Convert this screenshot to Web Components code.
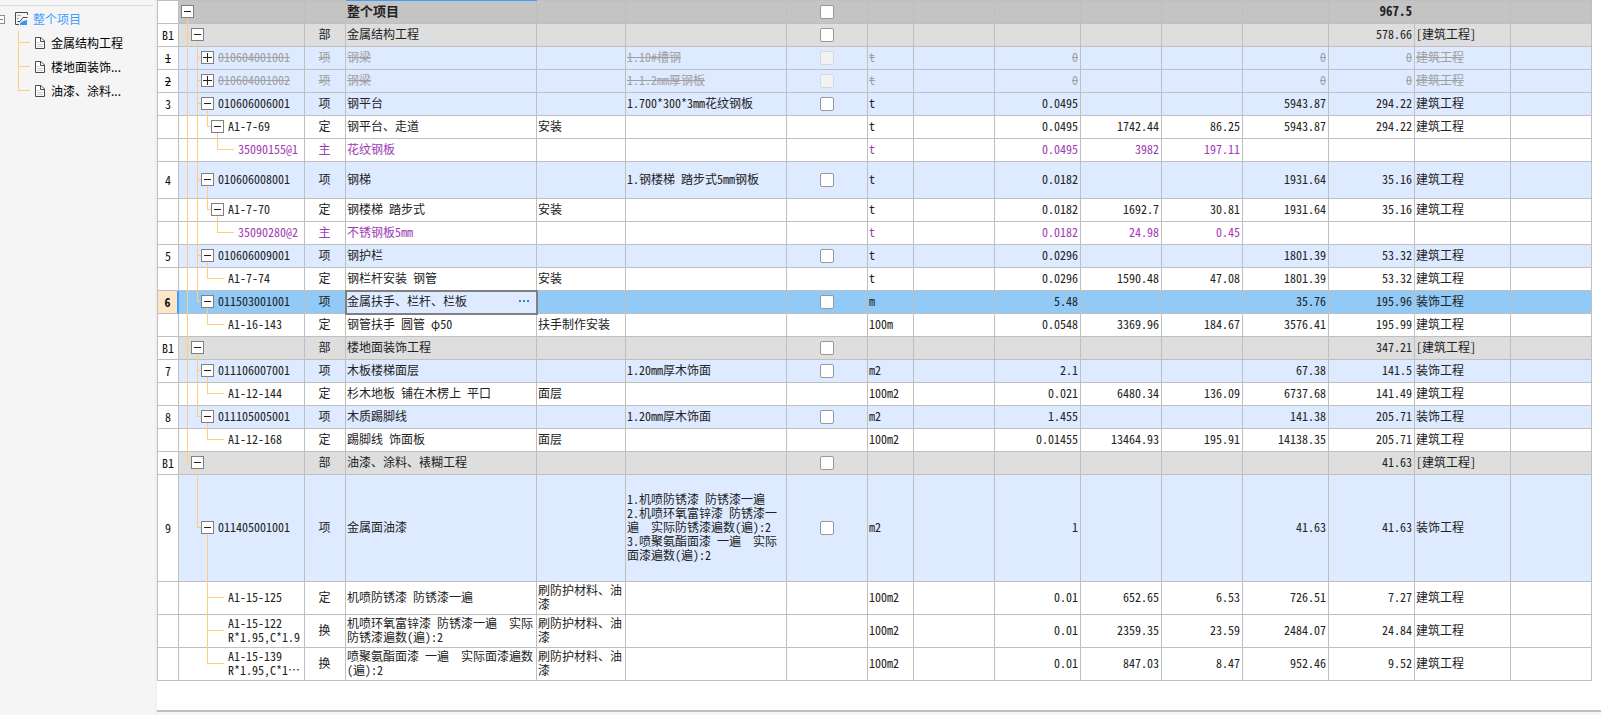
<!DOCTYPE html>
<html lang="zh-CN">
<head>
<meta charset="utf-8">
<title>分部分项工程量清单</title>
<style>
  html, body { height: 100%; margin: 0; }
  body { background: #fff; font: 12px/14px "Noto Sans CJK SC", sans-serif; color: #222; }
</style>
</head>
<body>
<estimate-app></estimate-app>

<template id="app-template">
  <style>
    :host { display: grid; grid-template-columns: 157px minmax(0, 1fr); min-height: 100%; background: #f5f5f5; }
    main { display: flex; flex-direction: column; min-width: 0; padding-bottom: 3px; }
    .sheet { flex: 1; background: #fff; border-bottom: 2px solid #bfbfbf; padding-right: 9px; overflow-x: auto; }
    aside { border-right: 2px solid #f0f0f0; min-width: 0; overflow: hidden; }
  </style>
  <aside>
    <project-tree>
      <project-node>金属结构工程</project-node>
      <project-node>楼地面装饰...</project-node>
      <project-node last>油漆、涂料...</project-node>
    </project-tree>
  </aside>
  <main><div class="sheet"><quantity-grid></quantity-grid></div></main>
</template>

<template id="tree-template">
  <style>
    :host { display: block; padding-top: 5px; color: #000; }
    .root { border-top: 1px solid #dedede; margin-right: 2px; padding-top: 1px; display: flex; align-items: center; height: 24px; line-height: 24px; }
    button { width: 5px; height: 9px; padding: 0; border: 1px solid #8c8c8c; border-left: 0; background: #fff; display: flex; align-items: center; }
    button::before { content: ""; width: 3px; height: 1px; background: #2f8de4; }
    svg { margin: 0 5px 0 10px; flex: none; }
    a { color: #409eff; text-decoration: none; }
    .nodes { padding-left: 18px; }
  </style>
  <nav aria-label="项目结构">
    <div class="root">
      <button type="button" aria-label="折叠整个项目"></button>
      <svg width="13" height="14" viewBox="0 0 13 14" fill="none">
        <path d="M12.500 3V0.500H0.500V12.500H4" stroke="#4a4a4a"/>
        <path d="M2 3.500H6M2 6.500H4" stroke="#7ab8f8"/>
        <path d="M2.500 9.500H5L8 5.500H12.500" stroke="#4a4a4a"/>
        <path d="M5 13V11L8 9L12 8V13Z" fill="#3c96f5"/>
      </svg>
      <a href="#all">整个项目</a>
    </div>
    <div class="nodes"><slot></slot></div>
  </nav>
</template>

<template id="node-template">
  <style>
    :host { display: flex; height: 24px; line-height: 24px; align-items: center; }
    .branch { width: 12px; height: 24px; display: grid; grid-template-rows: 12px 12px; }
    .branch i { border-left: 1px solid #ffcc80; }
    .branch i:first-child { border-bottom: 1px solid #ffcc80; }
    :host([last]) .branch i:last-child { border-left-color: transparent; }
    svg { margin: 0 6px 0 5px; flex: none; }
    a { color: #000; text-decoration: none; white-space: nowrap; }
  </style>
  <span class="branch"><i></i><i></i></span>
  <svg width="10" height="12" viewBox="0 0 10 12" fill="none">
    <path d="M0.500 0.500H6L9.500 4V11.500H0.500Z" fill="#fff" stroke="#4a4a4a"/>
    <path d="M5.500 0.500V4.500H9.500" stroke="#4a4a4a"/>
    <path d="M2 5.500H4M2 7.500H8M2 9.500H8" stroke="#c8c8c8"/>
  </svg>
  <a href="#section"><slot></slot></a>
</template>

<template id="branch-template">
  <style>
    :host { display: flex; height: calc(100% + 1px); margin-bottom: -1px; align-items: center; padding-left: 2px; box-sizing: border-box; }
    .lane, .joint { flex: none; height: 100%; display: flex; flex-direction: column; }
    .lane { width: 10px; }
    .joint { width: 13px; margin-right: 4px; }
    .up, .down { margin-left: 6px; box-sizing: border-box; }
    .up { flex: 1 1 0; }
    .down { flex: 1 1 2px; }
    .line { border-left: 1px solid #ffcc80; }
    .across { height: 1px; background: #ffcc80; margin-left: 6px; flex: none; }
    .joint .across { margin-left: 0; }
    button { flex: none; width: 13px; height: 13px; padding: 0; border: 1px solid #808080; background: #fff; display: grid; place-items: center; }
    .text { min-width: 0; padding-bottom: 3px; overflow: hidden; }
  </style>
</template>

<template id="grid-template">
  <style>
    :host { display: block; min-width: 1244px; font-feature-settings: "hwid"; }
    table { width: 100%; table-layout: fixed; border-spacing: 0; border-collapse: separate; border: 1px solid #bfbfbf; border-width: 1px 0 0 1px; }
    col.no { width: 21px; } col.code { width: 126px; } col.kind { width: 41px; }
    col.feature { width: 89px; } col.detail { width: 161px; } col.unit { width: 46px; }
    col.tick, col.num { width: 81px; } col.wide { width: 86px; } col.trade { width: 96px; }
    tr { height: var(--row, 23px); }
    td, th { box-sizing: border-box; border: 1px solid #bfbfbf; border-width: 0 1px 1px 0; padding: 0 2px 2px 1px; font-weight: normal; text-align: left; vertical-align: middle; white-space: pre-wrap; }
    th { background: #fff; text-align: center; color: #111; padding: 0; }
    td.code, td.tick { padding: 0; }
    td.code { height: inherit; }
    td.kind { text-align: center; }
    td.n { text-align: right; white-space: nowrap; }
    .total td { background: #c4c4c4; font-weight: bold; font-size: 13px; }
    .total td.name { box-shadow: 0 -1px #409eff; }
    .part td { background: #dedede; }
    .item td { background: #deeaff; }
    .off td { color: #a0a0a0; }
    .off td, .off th, .off tree-branch { text-decoration: line-through; }
    .off td.code { text-decoration: none; }
    .stuff td { color: #a03ab5; }
    .current td { background: #91c9f7; }
    .current th { background: #fde6c8; font-weight: bold; border-right: 2px solid #409eff; }
    .mid { --row: 37px; } .high { --row: 107px; } .two { --row: 33px; }
    .full { font-feature-settings: "fwid"; }
    input[type=checkbox] { appearance: none; display: block; box-sizing: border-box; width: 14px; height: 14px; margin: 0 auto; border: 1px solid #999; border-radius: 2px; background: #fff; }
    input[type=checkbox]:disabled { background: #f2f2f2; border-color: #d8d8d8; }
    .current td.name { background: #deeaff; outline: 2px solid #808080; outline-offset: -1px; }
    .field { display: flex; align-items: center; }
    .field input { flex: 1; min-width: 0; height: 14px; padding: 0; border: 0; background: none; font: inherit; font-feature-settings: inherit; color: inherit; outline: 0; }
    .field button { width: 20px; height: 14px; padding: 0; border: 0; background: none; display: grid; place-items: center; }
  </style>
  <table aria-label="工程量清单">
    <colgroup>
      <col class="no"><col class="code"><col class="kind"><col><col class="feature"><col class="detail"><col class="tick"><col class="unit"><col class="num"><col class="wide"><col class="num"><col class="num"><col class="wide"><col class="wide"><col class="trade"><col class="num">
    </colgroup>
    <tbody></tbody>
  </table>
</template>

<script>
  const stamp = (host, id) => {
    const root = host.attachShadow({ mode: "open" });
    root.append(document.getElementById(id).content.cloneNode(true));
    return root;
  };

  customElements.define("project-node", class extends HTMLElement {
    constructor() { super(); stamp(this, "node-template"); }
  });
  customElements.define("project-tree", class extends HTMLElement {
    constructor() { super(); stamp(this, "tree-template"); }
  });

  /* Tree cell. "lanes" holds one letter per ancestor level:
     p = line passes through, b = branch, l = last branch, x = empty.
     "state" is open, closed or leaf. */
  customElements.define("tree-branch", class extends HTMLElement {
    constructor() { super(); this.view = stamp(this, "branch-template"); }
    connectedCallback() {
      const lane = k => `<span class="lane"><i class="up ${k !== "x" ? "line" : ""}"></i>` +
        (k === "b" || k === "l" ? '<i class="across"></i>' : "") +
        `<i class="down ${k === "p" || k === "b" ? "line" : ""}"></i></span>`;
      const state = this.getAttribute("state");
      const sign = state === "closed" ? "M0 4.5H9M4.5 0V9" : "M1 4.5H8";
      const joint = state === "leaf"
        ? '<i class="up"></i><i class="across"></i><i class="down"></i>'
        : `<i class="up"></i><button type="button" aria-label="${state === "open" ? "折叠" : "展开"}"><svg width="9" height="9" viewBox="0 0 9 9"><path d="${sign}" stroke="#222"/></svg></button><i class="down ${state === "open" ? "line" : ""}"></i>`;
      const box = document.createElement("div");
      box.style.display = "contents";
      box.innerHTML = [...this.getAttribute("lanes")].map(lane).join("") +
        `<span class="joint">${joint}</span><span class="text"><slot></slot></span>`;
      this.view.append(box);
    }
  });

  /* class | no | lanes | state | code | kind | name | feature | detail | tick | unit | qty | price | cost | unit total | total | trade */
  const rows = [
    "total|||open|||整个项目|||1||||||967.5|",
    "part|B1|b|open||部|金属结构工程|||1||||||578.66|[建筑工程]",
    "item off|1|pb|closed|010604001001|项|钢梁||1.10#槽钢|1|t|0|||0|0|建筑工程",
    "item off|2|pb|closed|010604001002|项|钢梁||1.1.2mm厚钢板|1|t|0|||0|0|建筑工程",
    "item|3|pb|open|010606006001|项|钢平台||1.700*300*3mm花纹钢板|1|t|0.0495|||5943.87|294.22|建筑工程",
    "||ppl|open|A1-7-69|定|钢平台、走道|安装|||t|0.0495|1742.44|86.25|5943.87|294.22|建筑工程",
    "stuff||ppxl|leaf|35090155@1|主|花纹钢板||||t|0.0495|3982|197.11|||",
    "item mid|4|pb|open|010606008001|项|钢梯||1.钢楼梯 踏步式5mm钢板|1|t|0.0182|||1931.64|35.16|建筑工程",
    "||ppl|open|A1-7-70|定|钢楼梯 踏步式|安装|||t|0.0182|1692.7|30.81|1931.64|35.16|建筑工程",
    "stuff||ppxl|leaf|35090280@2|主|不锈钢板5mm||||t|0.0182|24.98|0.45|||",
    "item|5|pb|open|010606009001|项|钢护栏|||1|t|0.0296|||1801.39|53.32|建筑工程",
    "||ppl|leaf|A1-7-74|定|钢栏杆安装 钢管|安装|||t|0.0296|1590.48|47.08|1801.39|53.32|建筑工程",
    "item current|6|pl|open|011503001001|项|金属扶手、栏杆、栏板|||1|m|5.48|||35.76|195.96|装饰工程",
    "||pxl|leaf|A1-16-143|定|钢管扶手 圆管 <span class='full'>φ</span>50|扶手制作安装|||100m|0.0548|3369.96|184.67|3576.41|195.99|建筑工程",
    "part|B1|b|open||部|楼地面装饰工程|||1||||||347.21|[建筑工程]",
    "item|7|pb|open|011106007001|项|木板楼梯面层||1.20mm厚木饰面|1|m2|2.1|||67.38|141.5|装饰工程",
    "||ppl|leaf|A1-12-144|定|杉木地板 铺在木楞上 平口|面层|||100m2|0.021|6480.34|136.09|6737.68|141.49|建筑工程",
    "item|8|pl|open|011105005001|项|木质踢脚线||1.20mm厚木饰面|1|m2|1.455|||141.38|205.71|装饰工程",
    "||pxl|leaf|A1-12-168|定|踢脚线 饰面板|面层|||100m2|0.01455|13464.93|195.91|14138.35|205.71|建筑工程",
    "part|B1|l|open||部|油漆、涂料、裱糊工程|||1||||||41.63|[建筑工程]",
    "item high|9|xl|open|011405001001|项|金属面油漆||1.机喷防锈漆 防锈漆一遍\n2.机喷环氧富锌漆 防锈漆一\n遍  实际防锈漆遍数(遍):2\n3.喷聚氨酯面漆 一遍  实际\n面漆遍数(遍):2|1|m2|1|||41.63|41.63|装饰工程",
    "two||xxb|leaf|A1-15-125|定|机喷防锈漆 防锈漆一遍|刷防护材料、油\n漆|||100m2|0.01|652.65|6.53|726.51|7.27|建筑工程",
    "two||xxb|leaf|A1-15-122\nR*1.95,C*1.9|换|机喷环氧富锌漆 防锈漆一遍  实际\n防锈漆遍数(遍):2|刷防护材料、油\n漆|||100m2|0.01|2359.35|23.59|2484.07|24.84|建筑工程",
    "two||xxl|leaf|A1-15-139\nR*1.95,C*1⋯|换|喷聚氨酯面漆 一遍  实际面漆遍数\n(遍):2|刷防护材料、油\n漆|||100m2|0.01|847.03|8.47|952.46|9.52|建筑工程"
  ];

  customElements.define("quantity-grid", class extends HTMLElement {
    constructor() {
      super();
      const root = stamp(this, "grid-template");
      root.querySelector("tbody").innerHTML = rows.map(line => {
        const [cls, no, lanes, state, code, kind, name, feature, detail, tick, unit, ...rest] = line.split("|");
        const trade = rest.pop();
        const off = cls.includes("off");
        const nameCell = cls.includes("current")
          ? `<td class="name"><div class="field"><input type="text" aria-label="名称" value="${name}"><button type="button" aria-label="更多"><svg width="10" height="2" viewBox="0 0 10 2"><path d="M0 1H2M4 1H6M8 1H10" stroke="#3485c8" stroke-width="2"/></svg></button></div></td>`
          : `<td class="name">${name}</td>`;
        const box = tick ? `<input type="checkbox" aria-label="选择 ${code || name}"${off ? " disabled" : ""}>` : "";
        return `<tr class="${cls}"><th scope="row">${no}</th>` +
          `<td class="code"><tree-branch lanes="${lanes}" state="${state}">${code}</tree-branch></td>` +
          `<td class="kind">${kind}</td>${nameCell}<td>${feature}</td><td>${detail}</td>` +
          `<td class="tick">${box}</td><td>${unit}</td><td></td>` +
          rest.map(v => `<td class="n">${v}</td>`).join("") + `<td>${trade}</td><td></td></tr>`;
      }).join("");
    }
  });

  customElements.define("estimate-app", class extends HTMLElement {
    constructor() { super(); stamp(this, "app-template"); }
  });
</script>
</body>
</html>
